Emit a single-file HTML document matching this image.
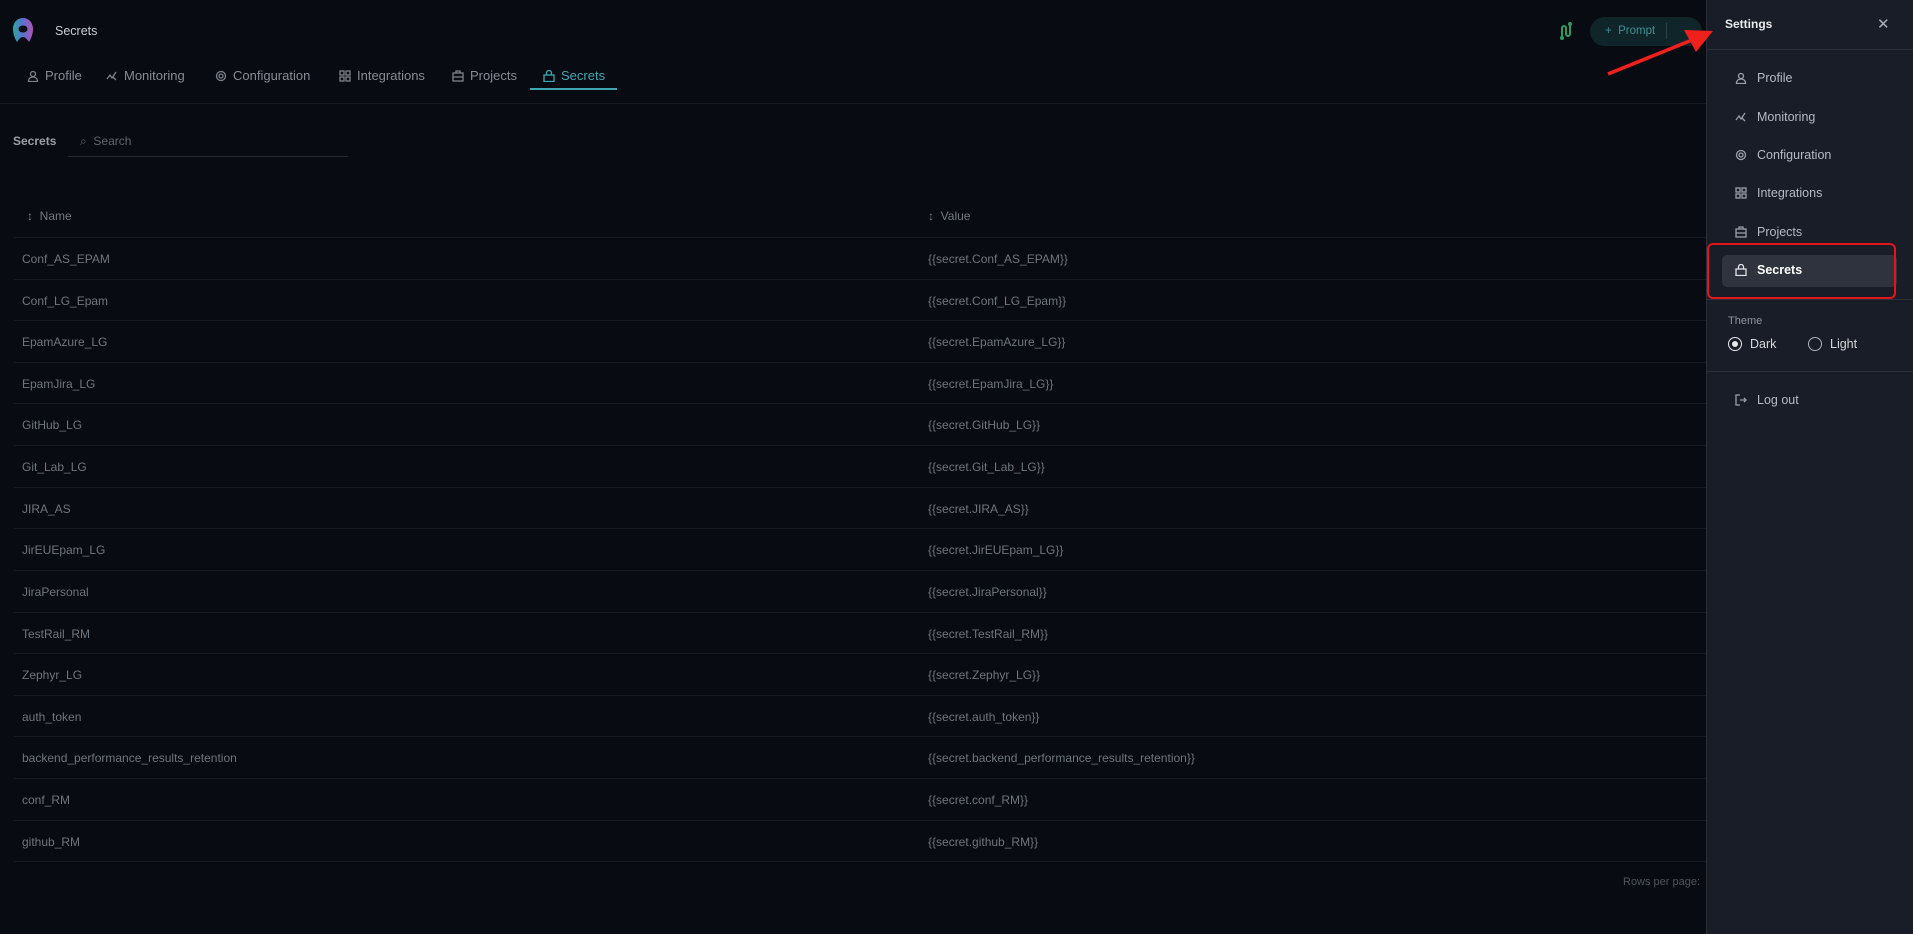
<!DOCTYPE html>
<html><head><meta charset="utf-8"><style>
*{margin:0;padding:0;box-sizing:border-box}
body{width:1913px;height:934px;background:#080b11;font-family:"Liberation Sans",sans-serif;position:relative;overflow:hidden;color:#9aa0aa}
.a{position:absolute;white-space:nowrap}
.tab{position:absolute;top:68px;font-size:13px;color:#858b95;display:flex;align-items:center;gap:6px}
.tab svg{width:12px;height:12px;stroke:#7d838d;fill:none;stroke-width:1.3}
.row{position:absolute;left:14px;width:1692px;border-top:1px solid #161a22;height:42px}
.row span{position:absolute;top:14px;font-size:12px;color:#6f757e}
.pi{position:absolute;left:1735px;display:flex;align-items:center;gap:10px;font-size:12.5px;color:#b4b9c2}
.pi svg{width:12px;height:12px;stroke:#9aa0aa;fill:none;stroke-width:1.3}
</style></head><body>
<svg class="a" style="left:12px;top:17px" width="22" height="27" viewBox="0 0 22 27"><defs><linearGradient id="g" x1="0" x2="1"><stop offset="0" stop-color="#2aa7a0"/><stop offset="0.5" stop-color="#5a6ed0"/><stop offset="1" stop-color="#b055b0"/></linearGradient></defs><path d="M11 1C5 1 1 6 1 12c0 5 2 10 4 13 2-3 4-5 6-5s4 2 6 5c2-3 4-8 4-13 0-6-4-11-10-11z" fill="url(#g)"/><ellipse cx="11" cy="12" rx="4.5" ry="3.5" fill="#0b0e14"/></svg>
<div class="a" style="left:55px;top:24px;font-size:12.5px;color:#c8ccd3">Secrets</div>
<div class="tab" style="left:27px"><svg viewBox="0 0 12 12"><circle cx="6" cy="4" r="2.5"/><path d="M1.5 11.5c0-3 2-4.5 4.5-4.5s4.5 1.5 4.5 4.5z"/></svg>Profile</div>
<div class="tab" style="left:106px"><svg viewBox="0 0 12 12"><path d="M1 9l3-4 2 3 4-6M7 7l3 3"/></svg>Monitoring</div>
<div class="tab" style="left:215px"><svg viewBox="0 0 12 12"><circle cx="6" cy="6" r="4.5"/><circle cx="6" cy="6" r="2"/></svg>Configuration</div>
<div class="tab" style="left:339px"><svg viewBox="0 0 12 12"><rect x="1" y="1" width="4" height="4"/><rect x="7" y="1" width="4" height="4"/><rect x="1" y="7" width="4" height="4"/><rect x="7" y="7" width="4" height="4"/></svg>Integrations</div>
<div class="tab" style="left:452px"><svg viewBox="0 0 12 12"><rect x="1" y="3" width="10" height="8"/><path d="M4 3V1h4v2M1 7h10"/></svg>Projects</div>
<div class="tab" style="left:543px;color:#3fa7b4"><svg viewBox="0 0 12 12" style="stroke:#3fa7b4"><rect x="1" y="5" width="10" height="6.5"/><path d="M3.5 5V3a2.5 2.5 0 015 0v2"/></svg>Secrets</div>
<div class="a" style="left:530px;top:88px;width:87px;height:2px;background:#3fa7b4"></div>
<div class="a" style="left:0;top:103px;width:1706px;height:1px;background:#161a22"></div>
<div class="a" style="left:13px;top:134px;font-size:12px;color:#9aa0aa;font-weight:bold">Secrets</div>
<div class="a" style="left:80px;top:134px;font-size:12px;color:#5e646e">&#x2315;&nbsp; Search</div>
<div class="a" style="left:68px;top:156px;width:280px;height:1px;background:#252a33"></div>
<div class="a" style="left:27px;top:209px;font-size:12px;color:#737983">&#x2195;&nbsp; Name</div>
<div class="a" style="left:928px;top:209px;font-size:12px;color:#737983">&#x2195;&nbsp; Value</div>
<div class="row" style="top:237px"><span style="left:8px">Conf_AS_EPAM</span><span style="left:914px">{{secret.Conf_AS_EPAM}}</span></div>
<div class="row" style="top:279px"><span style="left:8px">Conf_LG_Epam</span><span style="left:914px">{{secret.Conf_LG_Epam}}</span></div>
<div class="row" style="top:320px"><span style="left:8px">EpamAzure_LG</span><span style="left:914px">{{secret.EpamAzure_LG}}</span></div>
<div class="row" style="top:362px"><span style="left:8px">EpamJira_LG</span><span style="left:914px">{{secret.EpamJira_LG}}</span></div>
<div class="row" style="top:403px"><span style="left:8px">GitHub_LG</span><span style="left:914px">{{secret.GitHub_LG}}</span></div>
<div class="row" style="top:445px"><span style="left:8px">Git_Lab_LG</span><span style="left:914px">{{secret.Git_Lab_LG}}</span></div>
<div class="row" style="top:487px"><span style="left:8px">JIRA_AS</span><span style="left:914px">{{secret.JIRA_AS}}</span></div>
<div class="row" style="top:528px"><span style="left:8px">JirEUEpam_LG</span><span style="left:914px">{{secret.JirEUEpam_LG}}</span></div>
<div class="row" style="top:570px"><span style="left:8px">JiraPersonal</span><span style="left:914px">{{secret.JiraPersonal}}</span></div>
<div class="row" style="top:612px"><span style="left:8px">TestRail_RM</span><span style="left:914px">{{secret.TestRail_RM}}</span></div>
<div class="row" style="top:653px"><span style="left:8px">Zephyr_LG</span><span style="left:914px">{{secret.Zephyr_LG}}</span></div>
<div class="row" style="top:695px"><span style="left:8px">auth_token</span><span style="left:914px">{{secret.auth_token}}</span></div>
<div class="row" style="top:736px"><span style="left:8px">backend_performance_results_retention</span><span style="left:914px">{{secret.backend_performance_results_retention}}</span></div>
<div class="row" style="top:778px"><span style="left:8px">conf_RM</span><span style="left:914px">{{secret.conf_RM}}</span></div>
<div class="row" style="top:820px"><span style="left:8px">github_RM</span><span style="left:914px">{{secret.github_RM}}</span></div>
<div class="a" style="left:14px;top:861px;width:1692px;height:1px;background:#161a22"></div>
<div class="a" style="left:1623px;top:876px;font-size:11px;color:#4e545e">Rows per page:</div>
<svg class="a" style="left:1559px;top:22px" width="14" height="18" viewBox="0 0 14 18" fill="none" stroke="#2f9a5e" stroke-width="2"><path d="M3 16V6a2 2 0 014 0v6a2 2 0 004 0V2"/><circle cx="3" cy="16" r="1"/><circle cx="11" cy="2" r="1"/></svg>
<div class="a" style="left:1590px;top:17px;width:112px;height:29px;border-radius:15px;background:#10252a"></div>
<div class="a" style="left:1605px;top:24px;font-size:11.5px;line-height:14px;color:#3c8f93">+&nbsp;&nbsp;Prompt</div>
<div class="a" style="left:1666px;top:23px;width:1px;height:16px;background:#2a4448"></div>
<div class="a" style="left:1706px;top:0;width:207px;height:934px;background:#191d27;border-left:1px solid #2a2f39"></div>
<div class="a" style="left:1725px;top:17px;font-size:12px;color:#e8eaee;font-weight:bold">Settings</div>
<div class="a" style="left:1877px;top:15px;font-size:15px;color:#aab0b8">&#x2715;</div>
<div class="a" style="left:1707px;top:49px;width:206px;height:1px;background:#2a2f39"></div>
<div class="pi" style="top:71px"><svg viewBox="0 0 12 12"><circle cx="6" cy="4" r="2.5"/><path d="M1.5 11.5c0-3 2-4.5 4.5-4.5s4.5 1.5 4.5 4.5z"/></svg>Profile</div>
<div class="pi" style="top:110px"><svg viewBox="0 0 12 12"><path d="M1 9l3-4 2 3 4-6M7 7l3 3"/></svg>Monitoring</div>
<div class="pi" style="top:148px"><svg viewBox="0 0 12 12"><circle cx="6" cy="6" r="4.5"/><circle cx="6" cy="6" r="2"/></svg>Configuration</div>
<div class="pi" style="top:186px"><svg viewBox="0 0 12 12"><rect x="1" y="1" width="4" height="4"/><rect x="7" y="1" width="4" height="4"/><rect x="1" y="7" width="4" height="4"/><rect x="7" y="7" width="4" height="4"/></svg>Integrations</div>
<div class="pi" style="top:225px"><svg viewBox="0 0 12 12"><rect x="1" y="3" width="10" height="8"/><path d="M4 3V1h4v2M1 7h10"/></svg>Projects</div>
<div class="a" style="left:1722px;top:255px;width:175px;height:32px;border-radius:5px;background:#2e333d"></div>
<div class="pi" style="top:263px;color:#fff;font-weight:bold"><svg viewBox="0 0 12 12" style="stroke:#e0e3e8"><rect x="1" y="5" width="10" height="6.5"/><path d="M3.5 5V3a2.5 2.5 0 015 0v2"/></svg>Secrets</div>
<div class="a" style="left:1707px;top:243px;width:189px;height:56px;border:2px solid #e0161c;border-radius:6px"></div>
<div class="a" style="left:1707px;top:299px;width:206px;height:1px;background:#2a2f39"></div>
<div class="a" style="left:1728px;top:315px;font-size:11px;color:#8e949e">Theme</div>
<div class="a" style="left:1728px;top:337px;width:14px;height:14px;border-radius:50%;border:1.5px solid #e6e8ec"></div>
<div class="a" style="left:1732px;top:341px;width:6px;height:6px;border-radius:50%;background:#e6e8ec"></div>
<div class="a" style="left:1750px;top:337px;font-size:12.5px;color:#d4d7dc">Dark</div>
<div class="a" style="left:1808px;top:337px;width:14px;height:14px;border-radius:50%;border:1.5px solid #aab0b8"></div>
<div class="a" style="left:1830px;top:337px;font-size:12.5px;color:#d4d7dc">Light</div>
<div class="a" style="left:1707px;top:371px;width:206px;height:1px;background:#2a2f39"></div>
<div class="pi" style="top:393px"><svg viewBox="0 0 12 12"><path d="M5 1H1v10h4M5 6h6M9 4l2 2-2 2"/></svg>Log out</div>
<svg class="a" style="left:1600px;top:20px" width="120" height="60" viewBox="0 0 120 60"><path d="M8 54L92 20" stroke="#f0201c" stroke-width="3.5"/><polygon points="113,11 84,10 96,32" fill="#f0201c"/></svg>
</body></html>
